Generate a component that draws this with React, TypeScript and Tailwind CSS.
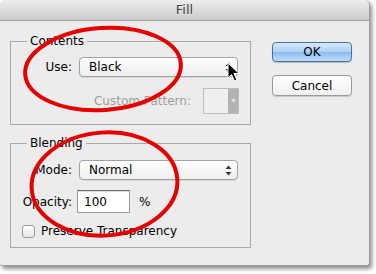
import React from "react";

function Arrows() {
  return (
    <svg width="7" height="11" viewBox="0 0 7 11" className="shrink-0">
      <path d="M3.5 0.5 L6.5 4 L0.5 4 Z" fill="#3a3a3a" />
      <path d="M3.5 10.5 L6.5 7 L0.5 7 Z" fill="#3a3a3a" />
    </svg>
  );
}

function Select({ value }: { value: string }) {
  return (
    <div className="ml-[7px] w-[159px] h-[20px] rounded-[4px] border border-[#a2a2a2] bg-gradient-to-b from-white to-[#eeeeee] shadow-[0_1px_0_rgba(0,0,0,0.08)] flex items-center justify-between pl-[9px] pr-[5px]">
      <span>{value}</span>
      <Arrows />
    </div>
  );
}

export default function App() {
  return (
    <div className="relative w-[376px] h-[274px] overflow-hidden bg-white font-['DejaVu_Sans',sans-serif] text-[12px] leading-[14px] text-black">
      <div className="w-[370px] h-[266px] bg-[#ececec] rounded-t-[5px] rounded-b-[3px] border-r border-b border-[#9b9b9b] shadow-[2px_3px_4px_rgba(0,0,0,0.45)] flex flex-col">
        {/* title bar */}
        <div className="h-[21px] shrink-0 rounded-t-[5px] border-b border-[#9f9f9f] bg-gradient-to-b from-[#eeeeee] to-[#cbcbcb] flex items-center justify-center text-[13px] text-[#404040] [text-shadow:0_1px_0_rgba(255,255,255,0.6)]">
          Fill
        </div>

        <div className="flex pt-[13px] pl-[10px]">
          <div className="flex flex-col w-[241px]">
            {/* Contents */}
            <fieldset className="border border-[#a8a8a8] pb-[10px]">
              <legend className="ml-[16px] px-[3px]">Contents</legend>
              <div className="flex items-center mt-[9px]">
                <span className="w-[61px] text-right">Use:</span>
                <Select value="Black" />
              </div>
              <div className="flex items-center justify-end pr-[11px] mt-[11px]">
                <span className="text-[#9d9d9d]">Custom Pattern:</span>
                <div className="ml-[12px] w-[36px] h-[26px] border border-[#bdbdbd] bg-[#efefef] flex justify-end">
                  <div className="w-[10px] h-full bg-[#b3b3b3] flex items-center justify-center">
                    <svg width="5" height="4" viewBox="0 0 5 4">
                      <path d="M0 0 L5 0 L2.5 4 Z" fill="#e2e2e2" />
                    </svg>
                  </div>
                </div>
              </div>
            </fieldset>

            {/* Blending */}
            <fieldset className="mt-[11px] border border-[#a8a8a8] pb-[9px]">
              <legend className="ml-[16px] px-[3px]">Blending</legend>
              <div className="flex items-center mt-[10px]">
                <span className="w-[61px] text-right">Mode:</span>
                <Select value="Normal" />
              </div>
              <div className="flex items-center mt-[10px]">
                <span className="w-[61px] text-right">Opacity:</span>
                <div className="ml-[5px] w-[53px] h-[23px] border border-[#9c9c9c] border-t-[#6f6f6f] bg-white shadow-[inset_0_1px_1px_rgba(0,0,0,0.15)] flex items-center pl-[6px]">
                  100
                </div>
                <span className="ml-[9px]">%</span>
              </div>
              <div className="flex items-center mt-[11px] pl-[11px]">
                <div className="w-[13px] h-[13px] rounded-[3px] border border-[#9a9a9a] bg-gradient-to-b from-white to-[#e6e6e6]" />
                <span className="ml-[6px]">Preserve Transparency</span>
              </div>
            </fieldset>
          </div>

          {/* buttons */}
          <div className="ml-[21px] mt-[8px] flex flex-col gap-[13px]">
            <div className="w-[80px] h-[20px] rounded-[4px] border border-[#4c6ea6] bg-[linear-gradient(to_bottom,#d9eafc_0%,#aed0f4_48%,#8dbdee_52%,#bcdcf9_100%)] flex items-center justify-center shadow-[0_1px_1px_rgba(0,0,0,0.2)]">
              OK
            </div>
            <div className="w-[80px] h-[21px] rounded-[4px] border border-[#9a9a9a] bg-gradient-to-b from-white to-[#f0f0f0] flex items-center justify-center shadow-[0_1px_1px_rgba(0,0,0,0.15)]">
              Cancel
            </div>
          </div>
        </div>
      </div>

      {/* annotations */}
      <svg className="absolute inset-0 pointer-events-none" width="376" height="274" viewBox="0 0 376 274">
        <ellipse cx="103" cy="69" rx="78" ry="41" transform="rotate(-4 103 69)" fill="none" stroke="#e60000" strokeWidth="4" />
        <ellipse cx="104.5" cy="184" rx="73" ry="51.5" transform="rotate(-4 104.5 184)" fill="none" stroke="#e60000" strokeWidth="4" />
        <path d="M228 63 L228 78 L231.5 74.5 L234.5 81 L236.8 80 L234 73.5 L239 73.5 Z" fill="#000" stroke="#fff" strokeWidth="1" strokeLinejoin="round" />
      </svg>
    </div>
  );
}
